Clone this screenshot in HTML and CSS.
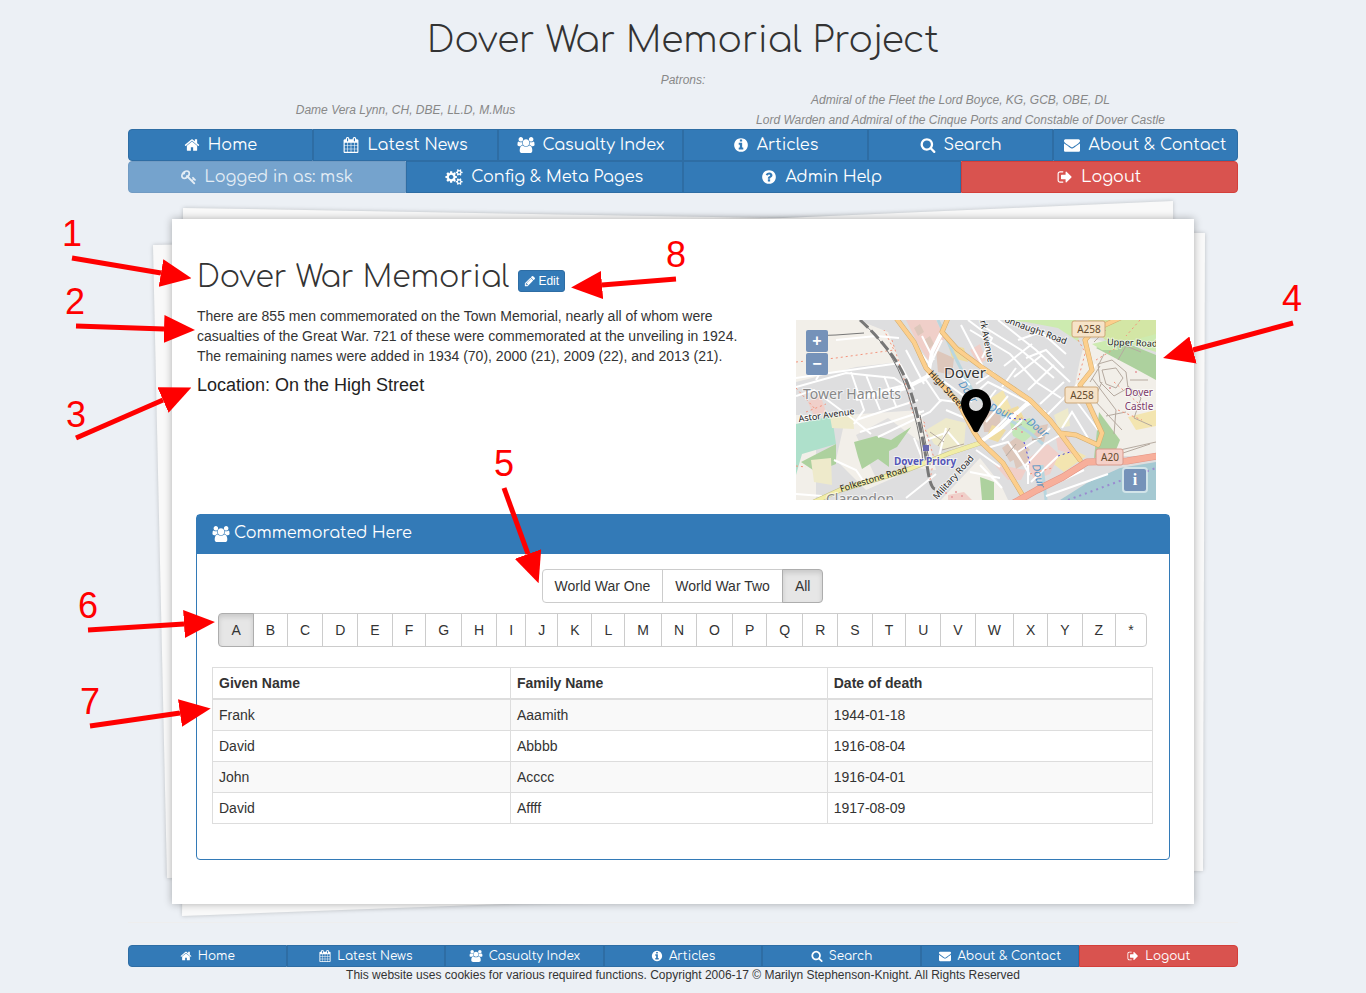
FILE: index.html
```html
<!DOCTYPE html>
<html lang="en">
<head>
<meta charset="utf-8">
<meta name="viewport" content="width=device-width, initial-scale=1">
<title>Dover War Memorial Project</title>
<link rel="stylesheet" href="styles.css">
</head>
<body>
<svg class="sprite" aria-hidden="true">
  <symbol id="home" viewBox="0 0 1792 1792"><path d="M1472 992v480q0 26-19 45t-45 19h-384v-384h-256v384h-384q-26 0-45-19t-19-45v-480q0-1 .5-3t.5-3l575-474 575 474q1 2 1 6zm223-69l-62 74q-8 9-21 11h-3q-13 0-21-7l-692-577-692 577q-12 8-24 7-13-2-21-11l-62-74q-8-10-7-23.5t11-21.5l719-599q32-26 76-26t76 26l244 204v-195q0-14 9-23t23-9h192q14 0 23 9t9 23v408l219 182q10 8 11 21.5t-7 23.5z"/></symbol>
  <symbol id="calendar" viewBox="0 0 1792 1792"><path d="M192 1664h288v-288h-288v288zm352 0h320v-288h-320v288zm-352-352h288v-320h-288v320zm352 0h320v-320h-320v320zm-352-384h288v-288h-288v288zm736 736h320v-288h-320v288zm-384-736h320v-288h-320v288zm768 736h288v-288h-288v288zm-384-352h320v-320h-320v320zm-352-864v-288q0-13-9.5-22.5t-22.5-9.5h-64q-13 0-22.5 9.5t-9.5 22.5v288q0 13 9.5 22.5t22.5 9.5h64q13 0 22.5-9.5t9.5-22.5zm736 864h288v-320h-288v320zm-384-384h320v-288h-320v288zm384 0h288v-288h-288v288zm32-480v-288q0-13-9.5-22.5t-22.5-9.5h-64q-13 0-22.5 9.5t-9.5 22.5v288q0 13 9.5 22.5t22.5 9.5h64q13 0 22.5-9.5t9.5-22.5zm384-64v1280q0 52-38 90t-90 38h-1408q-52 0-90-38t-38-90v-1280q0-52 38-90t90-38h128v-96q0-66 47-113t113-47h64q66 0 113 47t47 113v96h384v-96q0-66 47-113t113-47h64q66 0 113 47t47 113v96h128q52 0 90 38t38 90z"/></symbol>
  <symbol id="users" viewBox="-64 0 1920 1792"><path d="M529 896q-162 5-265 128h-134q-82 0-138-40.5t-56-118.5q0-353 124-353 6 0 43.500 21t97.500 42.500 119 21.500q67 0 133-23-5 37-5 66 0 139 81 256zm1071 637q0 120-73 189.500t-194 69.500h-874q-121 0-194-69.500t-73-189.500q0-53 3.500-103.500t14-109 26.500-108.500 43-97.500 62-81 85.500-53.500 111.500-20q10 0 43 21.500t73 48 107 48 135 21.500 135-21.500 107-48 73-48 43-21.500q61 0 111.500 20t85.500 53.500 62 81 43 97.500 26.500 108.500 14 109 3.500 103.500zm-1024-1277q0 106-75 181t-181 75-181-75-75-181 75-181 181-75 181 75 75 181zm704 384q0 159-112.500 271.500t-271.500 112.500-271.500-112.500-112.500-271.500 112.500-271.500 271.500-112.500 271.500 112.500 112.500 271.500zm576 225q0 78-56 118.500t-138 40.500h-134q-103-123-265-128 81-117 81-256 0-29-5-66 66 23 133 23 59 0 119-21.500t97.500-42.500 43.500-21q124 0 124 353zm-128-609q0 106-75 181t-181 75-181-75-75-181 75-181 181-75 181 75 75 181z"/></symbol>
  <symbol id="info" viewBox="0 0 1792 1792"><path d="M1152 1376v-160q0-14-9-23t-23-9h-96v-512q0-14-9-23t-23-9h-320q-14 0-23 9t-9 23v160q0 14 9 23t23 9h96v320h-96q-14 0-23 9t-9 23v160q0 14 9 23t23 9h448q14 0 23-9t9-23zm-128-896v-160q0-14-9-23t-23-9h-192q-14 0-23 9t-9 23v160q0 14 9 23t23 9h192q14 0 23-9t9-23zm640 416q0 209-103 385.5t-279.5 279.5-385.5 103-385.5-103-279.5-279.5-103-385.5 103-385.5 279.5-279.5 385.5-103 385.5 103 279.5 279.5 103 385.5z"/></symbol>
  <symbol id="search" viewBox="0 0 1792 1792"><path d="M1216 832q0-185-131.500-316.500t-316.500-131.500-316.500 131.500-131.500 316.500 131.500 316.500 316.500 131.500 316.500-131.500 131.500-316.500zm512 832q0 52-38 90t-90 38q-54 0-90-38l-343-342q-179 124-399 124-143 0-273.500-55.500t-225-150-150-225-55.500-273.500 55.500-273.500 150-225 225-150 273.500-55.500 273.500 55.500 225 150 150 225 55.500 273.500q0 220-124 399l343 343q37 37 37 90z"/></symbol>
  <symbol id="mail" viewBox="0 0 1792 1792"><path d="M1792 710v794q0 66-47 113t-113 47h-1472q-66 0-113-47t-47-113v-794q44 49 101 87 362 246 497 345 57 42 92.500 65.500t94.500 48 110 24.500h2q51 0 110-24.500t94.500-48 92.500-65.500q170-123 498-345 57-39 100-87zm0-294q0 79-49 151t-122 123q-376 261-468 325-10 7-42.500 30.500t-54 38-52 32.500-57.500 27-50 9h-2q-23 0-50-9t-57.500-27-52-32.500-54-38-42.500-30.500q-91-64-262-182.500t-205-142.500q-62-42-117-115.500t-55-136.500q0-78 41.500-130t118.500-52h1472q65 0 112.500 47t47.500 113z"/></symbol>
  <symbol id="key" viewBox="0 0 1792 1792"><path d="M832 512q0-80-56-136t-136-56-136 56-56 136q0 42 19 83-41-19-83-19-80 0-136 56t-56 136 56 136 136 56 136-56 56-136q0-42-19-83 41 19 83 19 80 0 136-56t56-136zm851 704q0 17-49 66t-66 49q-9 0-28.500-16t-36.500-33-38.500-40-24.500-26l-96 96 220 220q28 28 28 68 0 42-39 81t-81 39q-40 0-68-28l-671-671q-176 131-365 131-163 0-265.500-102.500t-102.500-265.500q0-160 95-313t248-248 313-95q163 0 265.500 102.500t102.500 265.500q0 189-131 365l355 355 96-96q-3-3-26-24.500t-40-38.500-33-36.500-16-28.500q0-17 49-66t66-49q13 0 23 10 6 6 46 44.500t82 79.500 86.500 86 73 78 28.500 41z"/></symbol>
  <symbol id="cogs" viewBox="0 0 1920 1792"><path d="M896 896q0-106-75-181t-181-75-181 75-75 181 75 181 181 75 181-75 75-181zm768 512q0-52-38-90t-90-38-90 38-38 90q0 53 37.5 90.5t90.5 37.5 90.5-37.5 37.5-90.5zm0-1024q0-52-38-90t-90-38-90 38-38 90q0 53 37.5 90.5t90.5 37.5 90.5-37.5 37.5-90.5zm-384 421v185q0 10-7 19.500t-16 10.500l-155 24q-11 35-32 76 34 48 90 115 7 11 7 20 0 12-7 19-23 30-82.500 89.500t-78.500 59.500q-11 0-21-7l-115-90q-37 19-77 31-11 108-23 155-7 24-30 24h-186q-11 0-20-7.500t-10-17.500l-23-153q-34-10-75-31l-118 89q-7 7-20 7-11 0-21-8-144-133-144-160 0-9 7-19 10-14 41-53t47-61q-23-44-35-82l-152-24q-10-1-17-9.500t-7-19.500v-185q0-10 7-19.500t16-10.500l155-24q11-35 32-76-34-48-90-115-7-11-7-20 0-12 7-20 22-30 82-89t79-59q11 0 21 7l115 90q34-18 77-32 11-108 23-154 7-24 30-24h186q11 0 20 7.500t10 17.500l23 153q34 10 75 31l118-89q8-7 20-7 11 0 21 8 144 133 144 160 0 8-7 19-12 16-42 54t-45 60q23 48 34 82l152 23q10 2 17 10.500t7 19.500zm640 533v140q0 16-149 31-12 27-30 52 51 113 51 138 0 4-4 7-122 71-124 71-8 0-46-47t-52-68q-20 2-30 2t-30-2q-14 21-52 68t-46 47q-2 0-124-71-4-3-4-7 0-25 51-138-18-25-30-52-149-15-149-31v-140q0-16 149-31 13-29 30-52-51-113-51-138 0-4 4-7 4-2 35-20t59-34 30-16q8 0 46 46.500t52 67.500q20-2 30-2t30 2q51-71 92-112l6-2q4 0 124 70 4 3 4 7 0 25-51 138 17 23 30 52 149 15 149 31zm0-1024v140q0 16-149 31-12 27-30 52 51 113 51 138 0 4-4 7-122 71-124 71-8 0-46-47t-52-68q-20 2-30 2t-30-2q-14 21-52 68t-46 47q-2 0-124-71-4-3-4-7 0-25 51-138-18-25-30-52-149-15-149-31v-140q0-16 149-31 13-29 30-52-51-113-51-138 0-4 4-7 4-2 35-20t59-34 30-16q8 0 46 46.500t52 67.500q20-2 30-2t30 2q51-71 92-112l6-2q4 0 124 70 4 3 4 7 0 25-51 138 17 23 30 52 149 15 149 31z"/></symbol>
  <symbol id="help" viewBox="0 0 1792 1792"><path d="M1024 1376v-192q0-14-9-23t-23-9h-192q-14 0-23 9t-9 23v192q0 14 9 23t23 9h192q14 0 23-9t9-23zm256-672q0-88-55.500-163t-138.500-116-170-41q-243 0-371 213-15 24 8 42l132 100q7 6 19 6 16 0 25-12 53-68 86-92 34-24 86-24 48 0 85.500 26t37.500 59q0 38-20 61t-68 45q-63 28-115.500 86.500t-52.500 125.500v36q0 14 9 23t23 9h192q14 0 23-9t9-23q0-19 21.500-49.500t54.500-49.500q32-18 49-28.500t46-35 44.500-48 28-60.500 12.500-81zm384 192q0 209-103 385.500t-279.500 279.500-385.500 103-385.500-103-279.500-279.500-103-385.500 103-385.500 279.500-279.500 385.500-103 385.500 103 279.500 279.500 103 385.500z"/></symbol>
  <symbol id="logout" viewBox="0 0 1792 1792"><path d="M704 1440q0 4 1 20t.5 26.500-3 23.500-10 19.500-20.500 6.500h-320q-119 0-203.500-84.500t-84.500-203.500v-704q0-119 84.500-203.500t203.500-84.500h320q13 0 22.500 9.500t9.500 22.500q0 4 1 20t.5 26.500-3 23.500-10 19.500-20.500 6.500h-320q-66 0-113 47t-47 113v704q0 66 47 113t113 47h312l11.500 1 11.500 3 8 5.500 7 9 2 13.500zm928-544q0 26-19 45l-544 544q-19 19-45 19t-45-19-19-45v-288h-448q-26 0-45-19t-19-45v-384q0-26 19-45t45-19h448v-288q0-26 19-45t45-19 45 19l544 544q19 19 19 45z"/></symbol>
  <symbol id="pencil" viewBox="0 0 1792 1792"><path d="M491 1536l91-91-235-235-91 91v107h128v128h107zm523-928q0-22-22-22-10 0-17 7l-542 542q-7 7-7 17 0 22 22 22 10 0 17-7l542-542q7-7 7-17zm-54-192l416 416-832 832h-416v-416zm683 96q0 53-37 90l-166 166-416-416 166-165q36-38 90-38 53 0 91 38l235 234q37 39 37 91z"/></symbol>
</svg>

<div class="page">
  <header class="masthead">
    <h1 class="site-title">Dover War Memorial Project</h1>
    <p class="patron">Patrons:</p>
    <div class="patrons">
      <p class="patron">Dame Vera Lynn, CH, DBE, LL.D, M.Mus</p>
      <p class="patron">Admiral of the Fleet the Lord Boyce, KG, GCB, OBE, DL<br>Lord Warden and Admiral of the Cinque Ports and Constable of Dover Castle</p>
    </div>
  </header>

  <nav class="nav" aria-label="Main">
    <a class="nav-item" href="#"><svg class="icon"><use href="#home"/></svg>Home</a>
    <a class="nav-item" href="#"><svg class="icon"><use href="#calendar"/></svg>Latest News</a>
    <a class="nav-item" href="#"><svg class="icon icon-wide"><use href="#users"/></svg>Casualty Index</a>
    <a class="nav-item" href="#"><svg class="icon"><use href="#info"/></svg>Articles</a>
    <a class="nav-item" href="#"><svg class="icon"><use href="#search"/></svg>Search</a>
    <a class="nav-item" href="#"><svg class="icon"><use href="#mail"/></svg>About &amp; Contact</a>
  </nav>
  <nav class="nav" aria-label="Account">
    <a class="nav-item nav-muted" href="#"><svg class="icon"><use href="#key"/></svg>Logged in as: msk</a>
    <a class="nav-item" href="#"><svg class="icon icon-wide"><use href="#cogs"/></svg>Config &amp; Meta Pages</a>
    <a class="nav-item" href="#"><svg class="icon"><use href="#help"/></svg>Admin Help</a>
    <a class="nav-item nav-danger" href="#"><svg class="icon"><use href="#logout"/></svg>Logout</a>
  </nav>

  <main class="stack">
    <svg class="sheets" viewBox="0 0 1022 685" preserveAspectRatio="none" aria-hidden="true">
      <path d="M-19 26 L1000 5 V640 L-5 659Z"/>
      <path d="M20 5 L1033 14 L1031 652 L30 640Z"/>
      <path d="M11 -11 L1001 6 V670 L11 600Z"/>
      <path d="M20 25 L1001 -18 L1003 660 L10 697Z"/>
    </svg>
    <div class="paper">
      <section class="intro">
        <div class="intro-text">
          <div class="title-row">
            <h2 class="title">Dover War Memorial</h2>
            <button class="edit" type="button"><svg class="icon"><use href="#pencil"/></svg>Edit</button>
          </div>
          <p class="lead">There are 855 men commemorated on the Town Memorial, nearly all of whom were casualties of the Great War. 721 of these were commemorated at the unveiling in 1924. The remaining names were added in 1934 (70), 2000 (21), 2009 (22), and 2013 (21).</p>
          <h3 class="location">Location: On the High Street</h3>
        </div>
        <div class="map">
          <svg class="map-art" viewBox="0 0 360 180" role="img" aria-label="Map of Dover">
            <rect width="360" height="180" fill="#dededf"/>
            <path fill="#f2efe9" d="M0 0H62L92 12 104 42 60 47 0 62ZM278 70 284 40 290 18 330 25 360 40V136H320L308 110 296 84ZM50 95 124 90 140 150 120 148 70 170 40 140ZM145 180 184 138 205 165 212 180ZM0 95H20V180H0Z"/>
            <path fill="#e0dfdf" d="M60 115 92 98 124 122 124 146 80 158Z"/>
            <path fill="#aee0cb" d="M0 104 36 96 40 124 6 134 0 155ZM14 108 34 105 38 124 12 128Z"/>
            <path fill="#add19e" d="M5 142 40 124V144L20 152ZM58 122 80 116 95 120 115 107 101 127 93 131V147L82 139 66 149 62 137ZM303 92 324 120 318 135 298 138ZM184 157 198 162V180H186ZM300 28 318 18 360 35V60L338 48Z"/>
            <path fill="#cdebb0" d="M316 0H360V32L310 16ZM207 0H280L283 22 262 8 230 2ZM296 24 320 18 322 30 306 30Z"/>
            <path fill="#d3e6a5" d="M292 0H360V14L338 20 309 20Z"/>
            <path fill="#eeeacb" d="M130 110 150 98 170 103 168 126 150 130 138 124ZM15 140 35 138 36 165 18 162ZM34 96 57 95 58 109 36 108ZM258 95 272 88 274 106 262 108Z"/>
            <path fill="#f3e5b0" d="M195 78 207 70 215 88 206 92ZM255 142 274 128 290 136 268 152ZM332 97 360 90V106L340 110Z"/>
            <path fill="#f0cfc9" d="M110 0 140 0 149 18 132 40 122 24ZM230 140 252 124 263 134 254 154 238 160ZM174 30 184 24 190 40 182 45ZM12 82 24 74 30 92 18 96ZM260 118 273 116 276 134 262 130ZM198 144 230 150 225 160 212 160ZM152 175 168 172 176 180H152Z"/>
            <path fill="#ddc7bb" d="M118 8 124 4 128 12 122 16ZM128 20 134 16 138 24 132 30ZM140 30 158 38 156 55 142 52ZM186 89 205 90 204 112 188 112ZM206 128 222 116 234 130 214 142ZM234 108 252 104 248 122 236 120ZM215 130 231 126 232 142 220 149Z"/>
            <path fill="#c3e7b8" d="M214 103 234 98 240 112 228 122 217 116Z"/>
            <path fill="#efdca0" d="M152 24 168 28 172 42 156 38ZM206 92 222 86 228 98 214 102ZM196 105 210 110 202 122 190 118Z"/>
            <path fill="#a5c9d2" d="M264 180 291 163 324 148 360 142V180Z"/>
            <path fill="none" stroke="#b9d6df" stroke-width="3" d="M142 0 158 35 176 70 198 90 234 113 247 124M246 145 250 180"/>
            <g fill="none" stroke="#fff" stroke-width="2">
              <path d="M0 58 40 52 104 43M0 67 50 53 98 58 108 65M40 20 80 16 103 18M60 77 130 60 145 82M55 52 68 90 58 104M70 55 84 90M88 56 100 86M0 76 18 70 58 100 75 114M82 117 134 92 145 80 160 82M104 44 118 70M110 30 128 64M118 24 134 45 146 20M126 16 138 40M60 100 122 80M64 112 128 91M38 140 60 150 70 165M0 174 26 176M110 178 140 154M118 118 126 138M130 120 152 112 164 126M142 140 150 108M150 90 178 102M160 80 176 90"/>
              <path d="M174 10 214 34 240 62 265 78M185 5 225 30 258 58M202 0 240 30 274 62M222 20 245 12 270 34M230 38 250 30 268 48M208 46 236 24M218 57 246 35M232 70 258 45M244 84 268 62M250 96 282 64M206 67 220 48M180 64 198 52M176 76 192 62 206 69 250 92M200 70 186 88M212 76 190 102M184 124 210 98 234 84M206 120 226 100M191 128 212 122 229 146 249 124 266 114M232 145 232 164M219 130 234 155M204 147 180 130M174 152 204 158M184 145 206 168M235 162 262 136M250 176 312 154M250 168 288 150M266 108 276 92 292 118M278 78 302 110M254 108 246 116 222 132M286 62 300 44"/>
              <path stroke-width="4" d="M184 122 205 108 235 80M146 12 136 32 132 56 110 68 60 79"/>
              <path d="M18 38 28 46 20 60M165 5 178 30 190 52M172 0 196 18 186 38M156 50 174 65M146 60 176 82"/>
            </g>
            <g fill="none" stroke="#b5aaa0" stroke-width="1">
              <path d="M302 44 316 40 330 52 332 68 318 76 304 62ZM306 50 320 48 327 58 320 68 310 64ZM306 62 298 80 326 110M332 66 345 78 338 98 356 106M296 58 320 90 318 114M304 46 294 62M334 60 352 60M310 96 330 92M302 46 308 34M310 10 298 22M322 40 330 26 345 32"/>
              <path d="M142 126 154 108M146 130 168 124M134 112 148 122M236 120 246 118M216 110 226 104M210 136 220 124M324 130 360 122M318 136 354 124"/>
            </g>
            <path fill="none" stroke="#f4937c" stroke-width="1" stroke-dasharray="2 3" d="M0 42 40 38 98 30 88 10M96 20 112 72 116 92 130 104M0 68 20 90M10 92 30 84M128 105 138 138 134 160M282 60 290 30M282 20 294 40M212 90 232 102M0 146 10 147M300 40 320 28M318 62 350 90M322 90 346 100M234 154 256 148M344 0 330 16"/>
            <g fill="#e5989b"><circle cx="150" cy="173" r="1"/><circle cx="156" cy="177" r="1"/><circle cx="160" cy="172" r="1"/><circle cx="166" cy="176" r="1"/><circle cx="220" cy="109" r="1"/><circle cx="226" cy="112" r="1"/><circle cx="314" cy="68" r="1"/><circle cx="340" cy="52" r="1"/></g>
            <path fill="none" stroke="#777" stroke-width="3" stroke-dasharray="11 4" d="M64 0Q84 18 98 38T120 90 131 145 139 169"/>
            <path fill="none" stroke="#777" stroke-width="1" d="M64 0Q84 18 96 38T117 90 127 145M12 16 40 15 68 13M124 95 134 145"/>
            <g fill="none" stroke-linejoin="round" stroke-linecap="round">
              <path stroke="#c5c086" stroke-width="5" d="M18 182 44 170 111 150 154 133 184 123"/>
              <path stroke="#f1eda7" stroke-width="4" d="M18 182 44 170 111 150 154 133 184 123"/>
              <path stroke="#d3ab6c" stroke-width="5" d="M100 -2 118 22 130 48 162 82 178 112 184 121 207 143 227 176M152 -2 146 12 161 29 184 46 234 80 254 100 264 113 284 140M264 113 280 115 302 125 306 113 294 87 284 65 296 50 289 20 298 10 324 -2"/>
              <path stroke="#fccf8d" stroke-width="4" d="M100 -2 118 22 130 48 162 82 178 112 184 121 207 143 227 176M152 -2 146 12 161 29 184 46 234 80 254 100 264 113 284 140M264 113 280 115 302 125 306 113 294 87 284 65 296 50 289 20 298 10 324 -2"/>
              <path stroke="#e39383" stroke-width="7" d="M216 184 241 170 267 157 291 142 331 141 362 136"/>
              <path stroke="#f7af9b" stroke-width="6" d="M216 184 241 170 267 157 291 142 331 141 362 136"/>
            </g>
            <path fill="none" stroke="#9a8bd0" stroke-width="2" stroke-dasharray="2 4" d="M272 180 310 166 360 148"/>
            <path fill="none" stroke="#4846df" stroke-width="1" stroke-dasharray="2 3" d="M213 98 232 100M228 122 234 144M262 136 274 132"/>
            <rect x="127" y="125" width="6" height="6" fill="#6768b0"/>
            <g class="map-text">
              <text class="halo" x="148" y="58" font-size="15" fill="#333">Dover</text>
              <text class="halo" x="7" y="79" font-size="14" fill="#888">Tower Hamlets</text>
              <text class="halo" x="30" y="184" font-size="14" fill="#888">Clarendon</text>
              <text class="halo" x="98" y="145" font-size="10" font-weight="700" fill="#5456b8">Dover Priory</text>
              <text class="halo" transform="translate(3 102) rotate(-8)" font-size="9">Astor Avenue</text>
              <text transform="translate(45 172) rotate(-17)" font-size="9">Folkestone Road</text>
              <text class="halo" transform="translate(141 180) rotate(-48)" font-size="9">Military Road</text>
              <text transform="translate(132 54) rotate(47)" font-size="9">High Street</text>
              <text class="halo" transform="translate(183 -4) rotate(79)" font-size="9">ark Avenue</text>
              <text class="halo" transform="translate(208 2) rotate(20)" font-size="9">onnaught Road</text>
              <text class="halo" transform="translate(311 25) rotate(2)" font-size="9">Upper Road</text>
              <g fill="#5795c5" font-size="11" font-style="italic">
                <text transform="translate(192 90) rotate(22)">Dour</text>
                <text transform="translate(230 103) rotate(39)">Dour</text>
                <text transform="translate(236 145) rotate(76)">Dour</text>
                <text transform="translate(162 64) rotate(55)">Dour</text>
              </g>
              <g class="halo" fill="#7d3a69" font-size="10" text-anchor="middle"><text x="343" y="76">Dover</text><text x="343" y="90">Castle</text></g>
              <g stroke="#cda778" fill="#f6e3c8"><rect x="276" y="1" width="33" height="16" rx="2"/><rect x="269" y="67" width="33" height="16" rx="2"/><rect x="300" y="129" width="27" height="16" rx="2" fill="#f5d0c8" stroke="#d99a8c"/></g>
              <g font-size="10" fill="#634a2c" text-anchor="middle"><text x="293" y="13">A258</text><text x="286" y="79">A258</text><text x="314" y="141">A20</text></g>
            </g>
            <path fill-rule="evenodd" d="M180 69C171 69 165 76 165 84 165 93 173 101 177 110 178 113 182 113 183 110 187 101 195 93 195 84 195 76 189 69 180 69ZM180 77A7 7 0 1 1 180 91 7 7 0 0 1 180 77Z"/>
          </svg>
          <div class="zoom">
            <button class="map-button" type="button" aria-label="Zoom in">+</button>
            <button class="map-button" type="button" aria-label="Zoom out">−</button>
          </div>
          <div class="credit"><button class="map-button" type="button" aria-label="Attribution">i</button></div>
        </div>
      </section>

      <section class="panel">
        <h3 class="panel-title"><svg class="icon icon-wide"><use href="#users"/></svg>Commemorated Here</h3>
        <div class="panel-body">
          <div class="group">
            <button class="btn" type="button">World War One</button><button class="btn" type="button">World War Two</button><button class="btn active" type="button">All</button>
          </div>
          <div class="group">
            <button class="btn active" type="button">A</button><button class="btn" type="button">B</button><button class="btn" type="button">C</button><button class="btn" type="button">D</button><button class="btn" type="button">E</button><button class="btn" type="button">F</button><button class="btn" type="button">G</button><button class="btn" type="button">H</button><button class="btn" type="button">I</button><button class="btn" type="button">J</button><button class="btn" type="button">K</button><button class="btn" type="button">L</button><button class="btn" type="button">M</button><button class="btn" type="button">N</button><button class="btn" type="button">O</button><button class="btn" type="button">P</button><button class="btn" type="button">Q</button><button class="btn" type="button">R</button><button class="btn" type="button">S</button><button class="btn" type="button">T</button><button class="btn" type="button">U</button><button class="btn" type="button">V</button><button class="btn" type="button">W</button><button class="btn" type="button">X</button><button class="btn" type="button">Y</button><button class="btn" type="button">Z</button><button class="btn" type="button">*</button>
          </div>
          <table class="people">
            <thead><tr><th class="given">Given Name</th><th class="family">Family Name</th><th>Date of death</th></tr></thead>
            <tbody>
              <tr><td>Frank</td><td>Aaamith</td><td>1944-01-18</td></tr>
              <tr><td>David</td><td>Abbbb</td><td>1916-08-04</td></tr>
              <tr><td>John</td><td>Acccc</td><td>1916-04-01</td></tr>
              <tr><td>David</td><td>Affff</td><td>1917-08-09</td></tr>
            </tbody>
          </table>
        </div>
      </section>
    </div>
  </main>

  <footer class="footer">
    <nav class="nav nav-small" aria-label="Footer">
      <a class="nav-item" href="#"><svg class="icon"><use href="#home"/></svg>Home</a>
      <a class="nav-item" href="#"><svg class="icon"><use href="#calendar"/></svg>Latest News</a>
      <a class="nav-item" href="#"><svg class="icon icon-wide"><use href="#users"/></svg>Casualty Index</a>
      <a class="nav-item" href="#"><svg class="icon"><use href="#info"/></svg>Articles</a>
      <a class="nav-item" href="#"><svg class="icon"><use href="#search"/></svg>Search</a>
      <a class="nav-item" href="#"><svg class="icon"><use href="#mail"/></svg>About &amp; Contact</a>
      <a class="nav-item nav-danger" href="#"><svg class="icon"><use href="#logout"/></svg>Logout</a>
    </nav>
    <p class="legal">This website uses cookies for various required functions. Copyright 2006-17 © Marilyn Stephenson-Knight. All Rights Reserved</p>
  </footer>

  <svg class="notes" viewBox="0 0 1366 993">
    <defs><marker id="head" viewBox="0 0 31 28" refX="0" refY="14" markerWidth="31" markerHeight="28" markerUnits="userSpaceOnUse" orient="auto"><path d="M0 0 31 14 0 28Z" fill="#f00"/></marker></defs>
    <g class="arrows">
      <path d="M72 258 161 273"/>
      <path d="M76 326 164 329"/>
      <path d="M76 438 163 400"/>
      <path d="M1293 323 1193 350"/>
      <path d="M504 488 528 554"/>
      <path d="M88 630 184 624"/>
      <path d="M90 726 180 713"/>
      <path d="M676 279 602 285"/>
    </g>
    <g class="note-number">
      <text x="72" y="246">1</text><text x="75" y="314">2</text><text x="76" y="427">3</text><text x="1292" y="311">4</text><text x="504" y="476">5</text><text x="88" y="618">6</text><text x="90" y="714">7</text><text x="676" y="267">8</text>
    </g>
  </svg>
</div>
</body>
</html>
```
FILE: styles.css
```css
* { box-sizing: border-box; }

body {
  margin: 0;
  background: #ecf0f5;
  color: #333;
  font: 14px/20px "Liberation Sans", Arial, sans-serif;
}

h1, h2, h3, p { margin: 0; font-weight: 400; }

button { font: inherit; color: inherit; cursor: pointer; }

.sprite { position: absolute; width: 0; height: 0; }

.page {
  position: relative;
  overflow: hidden;
  padding: 20px max(30px, calc(50% - 555px)) 8px;
}

.icon {
  width: 16px;
  height: 16px;
  fill: currentColor;
  flex: none;
}
.icon-wide { width: 18px; }

.masthead { text-align: center; }
.site-title {
  margin-bottom: 10px;
  font: 300 36px/40px Comfortaa, Lato, sans-serif;
}
.patrons {
  display: grid;
  grid-template-columns: 1fr 1fr;
  align-items: center;
  margin-bottom: -1px;
}
.patron {
  color: #888;
  font-size: 12px;
  font-style: italic;
}

.nav { display: flex; position: relative; }
.nav-item {
  flex: 1 1 0;
  display: flex;
  align-items: center;
  justify-content: center;
  gap: 8px;
  height: 32px;
  border: 1px solid #2e6da4;
  background: #337ab7;
  color: #fff;
  font: 16px/28px Comfortaa, Lato, sans-serif;
  text-decoration: none;
  white-space: nowrap;
}
.nav-item:first-child { border-radius: 4px 0 0 4px; }
.nav-item:last-child { border-radius: 0 4px 4px 0; }
.nav .nav-muted { background: #75a3cd; border-color: #719bc3; color: #e4edf5; }
.nav .nav-danger { background: #d9534f; border-color: #d43f3a; }
.nav-small .nav-item {
  gap: 6px;
  height: 22px;
  font-size: 12px;
  line-height: 18px;
}
.nav-small .icon { width: 12px; height: 12px; }
.nav-small .icon-wide { width: 14px; }

.stack {
  position: relative;
  margin: 26px 44px 0;
}
.sheets {
  position: absolute;
  inset: 0;
  width: 100%;
  height: 100%;
  overflow: visible;
}
.sheets path {
  fill: #f9f9f9;
  filter: drop-shadow(0 0 2px rgba(0, 0, 0, .2));
}
.paper {
  position: relative;
  padding: 24px 24px 44px;
  background: #fff;
  box-shadow: 0 0 8px rgba(0, 0, 0, .3);
}

.intro {
  display: flex;
  justify-content: space-between;
  align-items: flex-end;
  gap: 24px;
  padding: 15px 14px 14px 1px;
}
.intro-text {
  flex: 0 1 560px;
  align-self: flex-start;
}
.title-row {
  display: flex;
  align-items: baseline;
  gap: 9px;
  min-height: 40px;
  margin-bottom: 8px;
}
.title { font: 300 30px/40px Comfortaa, Lato, sans-serif; }
.edit {
  display: flex;
  align-items: center;
  gap: 2px;
  padding: 1px 5px;
  border: 1px solid #2e6da4;
  border-radius: 3px;
  background: #337ab7;
  color: #fff;
  font-size: 12px;
  line-height: 18px;
}
.edit .icon { width: 12px; height: 12px; }
.location {
  margin-top: 9px;
  font-size: 18px;
  color: #222;
}

.map {
  position: relative;
  flex: 0 0 360px;
  margin-top: 62px;
}
.map-art { display: block; width: 100%; }
.map-text { font-family: "Noto Sans", sans-serif; fill: #222; }
.halo { paint-order: stroke; stroke: rgba(255, 255, 255, .6); stroke-width: 2px; }
.zoom {
  position: absolute;
  top: 10px;
  left: 10px;
  display: grid;
  gap: 1px;
}
.credit {
  position: absolute;
  right: 8px;
  bottom: 7px;
  padding: 2px;
  border-radius: 4px;
  background: rgba(255, 255, 255, .5);
}
.map-button {
  display: block;
  width: 22px;
  height: 22px;
  padding: 0;
  border: 0;
  border-radius: 2px;
  background: #7592b9;
  color: #fff;
  font-size: 16px;
  font-weight: 700;
  line-height: 20px;
}
.credit .map-button { font-family: "Liberation Serif", serif; }

.panel {
  border: 1px solid #337ab7;
  border-radius: 4px;
}
.panel-title {
  display: flex;
  align-items: center;
  gap: 4px;
  padding: 9px 15px 11px;
  background: #337ab7;
  color: #fff;
  font: 16px/19px Comfortaa, Lato, sans-serif;
}
.panel-body { padding: 15px 16px 35px 15px; }
.group {
  display: flex;
  justify-content: center;
  margin-bottom: 10px;
}
.btn {
  height: 34px;
  margin-left: -1px;
  padding: 6px 12px;
  border: 1px solid #ccc;
  background: #fff;
}
.btn:first-child { margin-left: 0; border-radius: 4px 0 0 4px; }
.btn:last-child { border-radius: 0 4px 4px 0; }
.btn.active {
  z-index: 1;
  border-color: #adadad;
  background: #e6e6e6;
  box-shadow: inset 0 3px 5px rgba(0, 0, 0, .125);
}

.people {
  width: 100%;
  margin-top: 20px;
  border-collapse: collapse;
  table-layout: fixed;
}
.people th, .people td {
  padding: 5px 6px;
  border: 1px solid #ddd;
  text-align: left;
}
.people th { border-bottom-width: 2px; }
.people tbody tr:nth-child(odd) { background: #f9f9f9; }
.given { width: 31.7%; }
.family { width: 33.7%; }

.footer {
  margin-top: 18px;
  padding-top: 22px;
  border-top: 1px solid #eee;
}
.legal {
  margin-top: -2px;
  font-size: 12px;
  text-align: center;
}

.notes {
  position: absolute;
  top: 0;
  left: 50%;
  width: 1366px;
  height: 993px;
  margin-left: -683px;
  pointer-events: none;
}
.arrows path {
  stroke: #f00;
  stroke-width: 5px;
  marker-end: url(#head);
}
.note-number {
  fill: #f00;
  font-size: 36px;
  text-anchor: middle;
}
```
